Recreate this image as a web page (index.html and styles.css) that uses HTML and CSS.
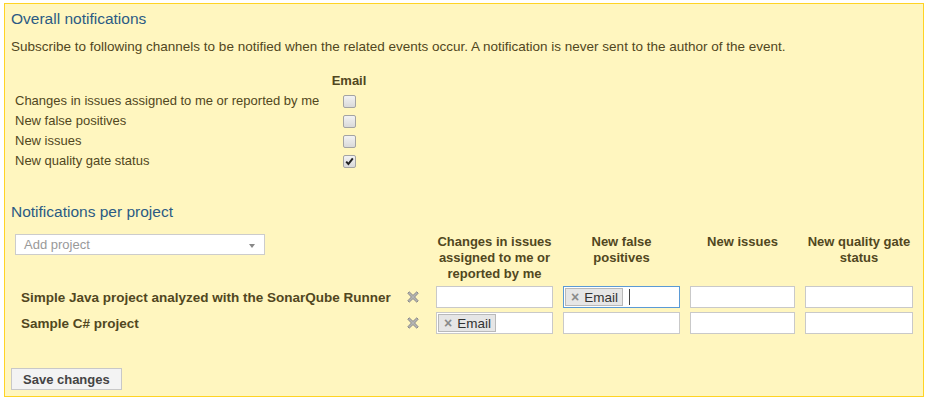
FILE: index.html
```html
<!DOCTYPE html>
<html>
<head>
<meta charset="utf-8">
<link rel="stylesheet" href="styles.css">
</head>
<body>
<form class="notice">
  <h2 class="title">Overall notifications</h2>
  <p class="intro">Subscribe to following channels to be notified when the related events occur. A notification is never sent to the author of the event.</p>

  <div class="overall">
    <div></div>
    <div class="ch-head">Email</div>

    <div class="lbl">Changes in issues assigned to me or reported by me</div>
    <div class="cbcell"><span class="cb"></span></div>

    <div class="lbl">New false positives</div>
    <div class="cbcell"><span class="cb"></span></div>

    <div class="lbl">New issues</div>
    <div class="cbcell"><span class="cb"></span></div>

    <div class="lbl">New quality gate status</div>
    <div class="cbcell"><span class="cb checked"><svg viewBox="0 0 11 11" width="11" height="11"><path d="M2.2 5.6 L4.4 8 L8.8 2.4" fill="none" stroke="#222" stroke-width="2"/></svg></span></div>
  </div>

  <h2 class="title title-project">Notifications per project</h2>

  <div class="projects">
    <div class="select">
      <span class="ph">Add project</span>
      <span class="arrow"></span>
    </div>
    <div></div>
    <div class="phead">Changes in issues<br>assigned to me or<br>reported by me</div>
    <div class="phead">New false<br>positives</div>
    <div class="phead">New issues</div>
    <div class="phead">New quality gate<br>status</div>

    <div class="pname">Simple Java project analyzed with the SonarQube Runner</div>
    <div class="rm"><svg viewBox="0 0 12 12" width="12" height="12"><path d="M2.2 0.8 L6 4.4 L9.8 0.8 L11.2 2.2 L7.6 6 L11.2 9.8 L9.8 11.2 L6 7.6 L2.2 11.2 L0.8 9.8 L4.4 6 L0.8 2.2 Z" fill="#b4b4b4" stroke="#8a8a8a" stroke-width="1" stroke-linejoin="round"/></svg></div>
    <div class="box"></div>
    <div class="box focus"><span class="chip"><span class="cx">×</span>Email</span><span class="caret"></span></div>
    <div class="box"></div>
    <div class="box"></div>

    <div class="pname">Sample C# project</div>
    <div class="rm"><svg viewBox="0 0 12 12" width="12" height="12"><path d="M2.2 0.8 L6 4.4 L9.8 0.8 L11.2 2.2 L7.6 6 L11.2 9.8 L9.8 11.2 L6 7.6 L2.2 11.2 L0.8 9.8 L4.4 6 L0.8 2.2 Z" fill="#b4b4b4" stroke="#8a8a8a" stroke-width="1" stroke-linejoin="round"/></svg></div>
    <div class="box"><span class="chip"><span class="cx">×</span>Email</span></div>
    <div class="box"></div>
    <div class="box"></div>
    <div class="box"></div>
  </div>

  <button type="button" class="save">Save changes</button>
</form>
</body>
</html>
```
FILE: styles.css
```css
html, body {
  margin: 0;
  padding: 0;
  background: #ffffff;
}

body {
  font-family: "Liberation Sans", Arial, sans-serif;
  font-size: 12px;
  color: #514721;
}

.notice {
  margin: 3px 3px 0 4px;
  border: 1px solid #ffd324;
  background: #fff6bf;
  padding: 5px 6px 6px 6px;
  height: 381px;
  box-sizing: content-box;
  display: flex;
  flex-direction: column;
  align-items: flex-start;
}

.title {
  margin: 0;
  font-size: 15.5px;
  line-height: 20px;
  font-weight: normal;
  color: #2b5b84;
}

.intro {
  margin: 10px 0 0 0;
  font-size: 13.5px;
  line-height: 16px;
}

.overall {
  margin: 16px 0 0 4px;
  display: grid;
  grid-template-columns: 316px 36px;
  column-gap: 0;
}

.ch-head {
  font-weight: bold;
  font-size: 13px;
  line-height: 20px;
  text-align: center;
}

.lbl {
  font-size: 13px;
  line-height: 20px;
  white-space: nowrap;
}

.cbcell {
  display: flex;
  justify-content: center;
  align-items: center;
  height: 20px;
}

.cb {
  width: 11px;
  height: 11px;
  border: 1px solid #a3a3a3;
  border-radius: 2px;
  background: linear-gradient(#f2f2f2, #d9d9d9);
  display: flex;
  align-items: center;
  justify-content: center;
}

.cb svg {
  display: block;
}

.title-project {
  margin-top: 31px;
}

.projects {
  margin: 12px 0 0 4px;
  display: grid;
  grid-template-columns: 372px 29px 117px 117px 105px 108px;
  column-gap: 10px;
  row-gap: 4px;
}

.select {
  align-self: start;
  box-sizing: border-box;
  width: 250px;
  height: 21px;
  border: 1px solid #cccccc;
  background: #ffffff;
  display: flex;
  align-items: center;
  justify-content: space-between;
  padding: 0 9px 0 8px;
  font-size: 13px;
}

.ph {
  color: #999999;
}

.arrow {
  width: 0;
  height: 0;
  border-left: 3px solid transparent;
  border-right: 3px solid transparent;
  border-top: 4px solid #888888;
  margin-top: 2px;
}

.phead {
  font-weight: bold;
  font-size: 13px;
  line-height: 16px;
  text-align: center;
  white-space: nowrap;
}

.pname {
  font-weight: bold;
  font-size: 13.5px;
  padding-left: 6px;
  display: flex;
  align-items: center;
  white-space: nowrap;
}

.rm {
  display: flex;
  align-items: center;
  padding-left: 10px;
}

.rm svg {
  display: block;
}

.box {
  box-sizing: border-box;
  height: 22px;
  border: 1px solid #c9c9c9;
  background: #ffffff;
  display: flex;
  align-items: center;
  padding-left: 1px;
}

.box.focus {
  border-color: #5b9ad5;
}

.chip {
  display: inline-flex;
  align-items: center;
  box-sizing: border-box;
  height: 18px;
  padding: 0 4px 0 5px;
  border: 1px solid #b9b9b9;
  background: #e6e6e6;
  font-size: 13.5px;
  color: #333333;
}

.cx {
  font-weight: bold;
  color: #8a8a8a;
  font-size: 14px;
  margin-right: 5px;
}

.caret {
  width: 1px;
  height: 16px;
  background: #444444;
  margin-left: 6px;
}

.save {
  margin-top: 34px;
  height: 22px;
  box-sizing: border-box;
  padding: 0 11px;
  border: 1px solid #c8c8c8;
  background: #f3f3f3;
  font-family: "Liberation Sans", Arial, sans-serif;
  font-weight: bold;
  font-size: 13px;
  color: #444444;
  border-radius: 0;
}
```
